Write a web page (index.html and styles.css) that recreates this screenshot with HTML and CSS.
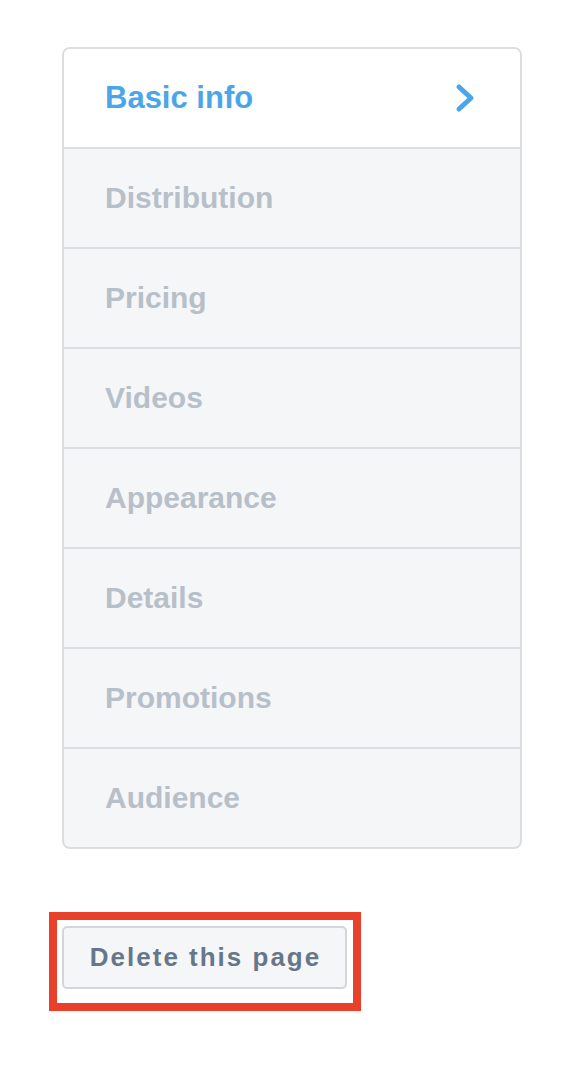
FILE: index.html
```html
<!DOCTYPE html>
<html>
<head>
<meta charset="utf-8">
<link rel="stylesheet" href="styles.css">
</head>
<body>
<nav class="menu">
  <div class="item active"><span>Basic info</span>
    <svg class="chev" width="22" height="32" viewBox="0 0 22 32"><path d="M4 5 L16 16 L4 27" fill="none" stroke="#4aa6e8" stroke-width="5" stroke-linecap="round" stroke-linejoin="round"/></svg>
  </div>
  <div class="item">Distribution</div>
  <div class="item">Pricing</div>
  <div class="item">Videos</div>
  <div class="item">Appearance</div>
  <div class="item">Details</div>
  <div class="item">Promotions</div>
  <div class="item">Audience</div>
</nav>
<div class="highlight">
  <button class="delete">Delete this page</button>
</div>
</body>
</html>
```
FILE: styles.css
```css
html, body { margin: 0; padding: 0; background: #fff; }
body { font-family: "Liberation Sans", Arial, sans-serif; }
.menu {
  margin: 47px 0 0 62px;
  width: 456px;
  border: 2px solid #dcdddf;
  border-radius: 8px;
  overflow: hidden;
  background: #f5f6f8;
}
.item {
  height: 98px;
  border-bottom: 2px solid #dcdee1;
  display: flex;
  align-items: center;
  justify-content: space-between;
  padding: 0 43px 0 41px;
  font-size: 30px;
  font-weight: bold;
  color: #b7c0c9;
}
.item:last-child { border-bottom: none; }
.item.active { background: #fff; color: #4aa6e8; }
.item.active span { font-size: 31px; }
.chev { display: block; }
.highlight {
  margin: 63px 0 0 49px;
  width: 285px;
  border: 8px solid #e8402a;
  padding: 6px 6px 14px 5px;
}
.delete {
  display: block;
  width: 285px;
  height: 63px;
  border: 2px solid #d1d7dc;
  border-radius: 5px;
  background: #f5f6f8;
  color: #66778a;
  font-family: "Liberation Sans", Arial, sans-serif;
  font-weight: bold;
  font-size: 26px;
  letter-spacing: 2px;
  padding: 0 0 0 2px;
}
```
